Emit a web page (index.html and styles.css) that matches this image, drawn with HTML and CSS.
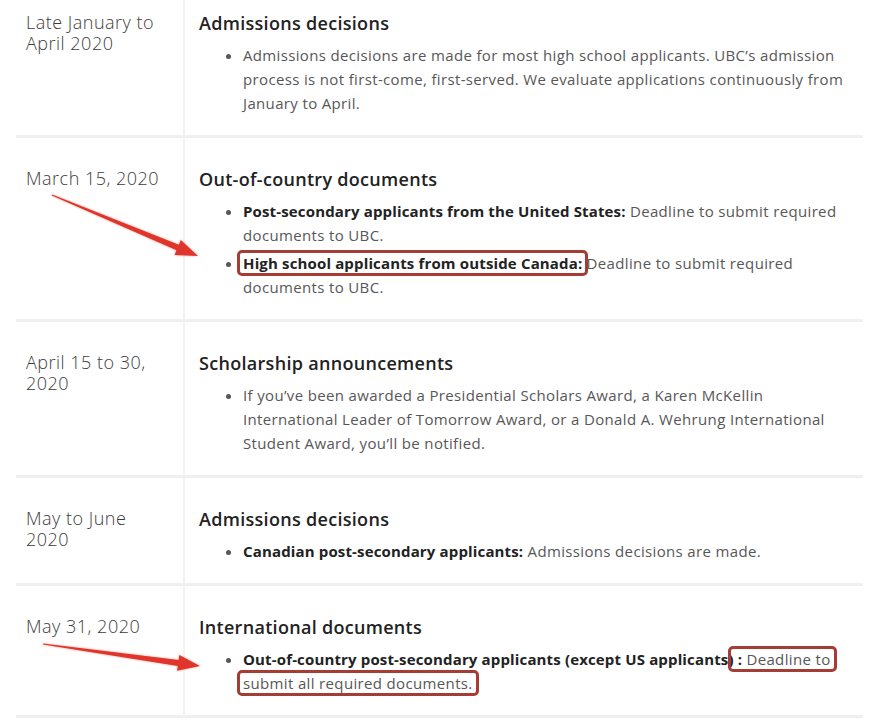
FILE: index.html
```html
<!DOCTYPE html>
<html lang="en">
<head>
<meta charset="utf-8">
<title>Key dates</title>
<link rel="stylesheet" href="styles.css">
</head>
<body>
<div class="page">
  <div class="timeline">
    <div class="row row-first">
      <div class="date">Late January to April 2020</div>
      <div class="detail">
        <h3>Admissions decisions</h3>
        <ul>
          <li>Admissions decisions are made for most high school applicants. UBC’s admission process is not first-come, first-served. We evaluate applications continuously from January to April.</li>
        </ul>
      </div>
    </div>
    <div class="row">
      <div class="date">March 15, 2020</div>
      <div class="detail">
        <h3>Out-of-country documents</h3>
        <ul>
          <li><strong>Post-secondary applicants from the United States:</strong> Deadline to submit required documents to UBC.</li>
          <li><strong class="mark">High school applicants from outside Canada:</strong> Deadline to submit required documents to UBC.</li>
        </ul>
      </div>
    </div>
    <div class="row">
      <div class="date">April 15 to 30, 2020</div>
      <div class="detail">
        <h3>Scholarship announcements</h3>
        <ul>
          <li>If you’ve been awarded a Presidential Scholars Award, a Karen McKellin International Leader of Tomorrow Award, or a Donald A. Wehrung International Student Award, you’ll be notified.</li>
        </ul>
      </div>
    </div>
    <div class="row">
      <div class="date">May to June 2020</div>
      <div class="detail">
        <h3>Admissions decisions</h3>
        <ul>
          <li><strong>Canadian post-secondary applicants:</strong> Admissions decisions are made.</li>
        </ul>
      </div>
    </div>
    <div class="row">
      <div class="date">May 31, 2020</div>
      <div class="detail">
        <h3>International documents</h3>
        <ul>
          <li><strong>Out-of-country post-secondary applicants (except US applicants)</strong><span class="mark"><strong> :</strong> Deadline to</span> <span class="mark">submit all required documents.</span></li>
        </ul>
      </div>
    </div>
  </div>

  <svg class="arrows" width="888" height="726" viewBox="0 0 888 726" aria-hidden="true">
    <polygon points="52.2,194.5 178.9,244.7 180.8,240.1 198,256 174.6,254.9 176.5,250.3 51.8,195.5"/>
    <polygon points="43.1,643.5 178.6,659.9 179.3,655.0 200,666 177.1,670.8 177.8,665.9 42.9,644.5"/>
  </svg>
</div>
</body>
</html>
```

FILE: styles.css
```css
* { box-sizing: border-box; }

html, body {
  margin: 0;
  padding: 0;
  background: #ffffff;
}

body {
  font-family: "Open Sans", "Liberation Sans", sans-serif;
  color: #575757;
}

.page {
  position: relative;
  width: 888px;
  height: 726px;
  overflow: hidden;
}

.timeline {
  margin-left: 16px;
  width: 847px;
}

.row {
  display: grid;
  grid-template-columns: 169px 1fr;
  border-bottom: 3px solid #eef0f2;
}

.date {
  padding: 30px 18px 0 10px;
  border-right: 2px solid #f2f3f5;
  font-size: 18px;
  line-height: 21px;
  font-weight: 300;
  letter-spacing: 0.5px;
  color: #3c3c3c;
}

.detail {
  padding: 29px 12px 20px 14px;
}

.row-first .date { padding-top: 12px; }
.row-first .detail { padding-top: 11px; }

h3 {
  margin: 0 0 8px;
  font-size: 18px;
  line-height: 24px;
  font-weight: 600;
  letter-spacing: 0.3px;
  color: #222222;
}

ul {
  margin: 0;
  padding-left: 44px;
  font-size: 15px;
  line-height: 24px;
  letter-spacing: 0.35px;
}

li + li { margin-top: 4px; }

strong {
  font-weight: 700;
  letter-spacing: 0.15px;
  color: #222222;
}

.mark {
  padding: 0 3px;
  margin: 0 -3px;
  outline: 3px solid #a63d35;
  outline-offset: 0;
  border-radius: 2px;
}

.arrows {
  position: absolute;
  top: 0;
  left: 0;
  pointer-events: none;
}

.arrows polygon {
  fill: #e0352a;
  filter: drop-shadow(0 0 1px rgba(230, 60, 40, 0.5));
}
```
